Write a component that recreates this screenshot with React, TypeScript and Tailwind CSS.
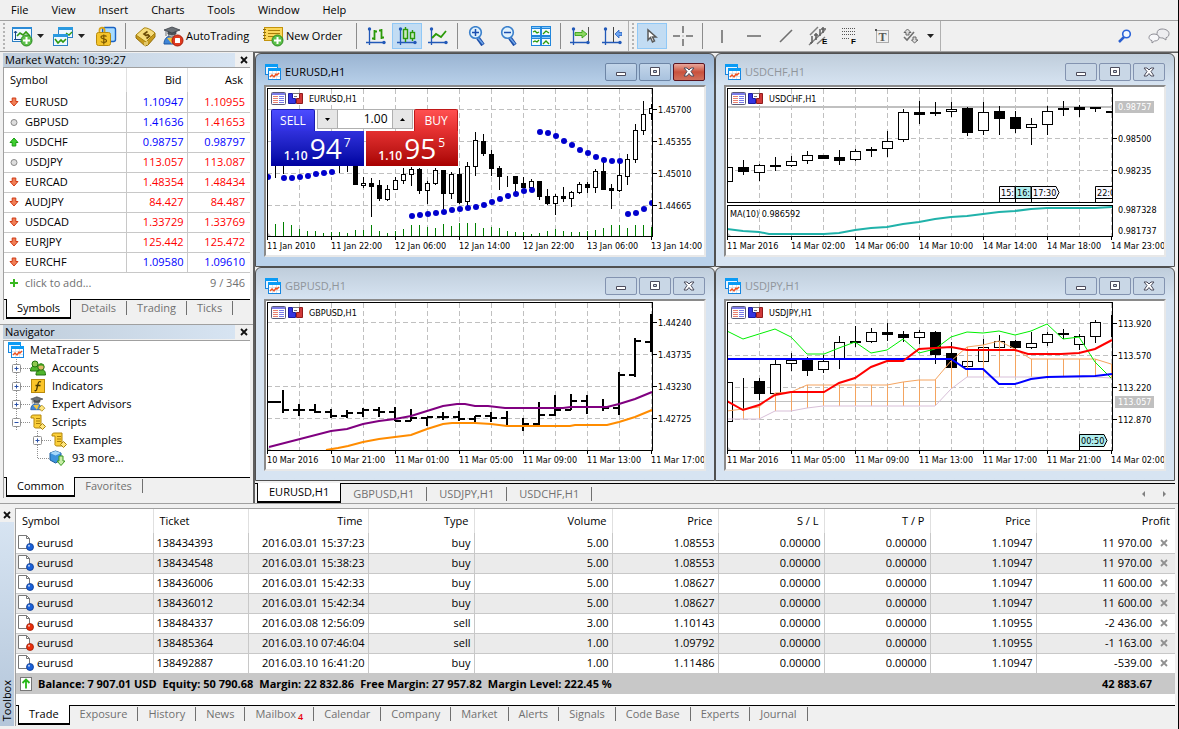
import React from "react";
import clsx from "clsx";

/* ---------- icons ---------- */

const ChartWindowIcon = () => (
  <svg width="16" height="16" viewBox="0 0 16 16" className="shrink-0">
    <rect x="0.5" y="0.5" width="12" height="10" fill="#eaf6ff" stroke="#1686e0" />
    <rect x="0" y="0" width="13" height="3" fill="#0a9bf5" />
    <rect x="3.5" y="4.5" width="12" height="11" fill="#fff" stroke="#1686e0" />
    <rect x="3" y="4" width="13" height="3" fill="#0a9bf5" />
    <path d="M4 9.5h11M4 12.5h11M7.5 7v8M11.5 7v8" stroke="#cfdbe6" strokeWidth="0.7" />
    <path d="M5 13l2-2 2 2 2-3 1 1 2-2" fill="none" stroke="#f0501e" strokeWidth="1.4" />
  </svg>
);

const PlusBadge = ({ x, y }: { x: number; y: number }) => (
  <g>
    <circle cx={x} cy={y} r="5.5" fill="#5cc04a" stroke="#2c8a20" />
    <path d={`M${x - 3.5} ${y}h7M${x} ${y - 3.5}v7`} stroke="#fff" strokeWidth="2" />
  </g>
);

const NewChartIcon = () => (
  <svg width="21" height="21" viewBox="0 0 21 21">
    <rect x="0.5" y="1.5" width="19" height="14" fill="#eef8ff" stroke="#2b7fc4" />
    <rect x="0" y="1" width="20" height="2" fill="#2b8ad6" />
    <path d="M3.5 14V5M2 7l1.5-2L5 7M2 13.5h15M15 12l2 1.5-2 1.5" fill="none" stroke="#1c4a86" />
    <path d="M5 10l3-3 3 2 3-3 4 4" fill="none" stroke="#2f9a10" strokeWidth="1.6" />
    <PlusBadge x={14.5} y={14.5} />
  </svg>
);

const ProfilesIcon = () => (
  <svg width="21" height="21" viewBox="0 0 21 21">
    <rect x="5.5" y="1.5" width="14" height="10" fill="#eef8ff" stroke="#2b7fc4" />
    <rect x="5" y="1" width="15" height="3" fill="#2b9ae0" />
    <path d="M13 7l3 2 3-3" fill="none" stroke="#2f9a10" strokeWidth="1.4" />
    <rect x="0.5" y="8.5" width="14" height="11" fill="#eef8ff" stroke="#2b7fc4" />
    <rect x="0" y="8" width="15" height="3" fill="#2b9ae0" />
    <path d="M2 13l3 4 3-3 2 2 3-3" fill="none" stroke="#2f9a10" strokeWidth="1.6" />
  </svg>
);

const MarketIcon = () => (
  <svg width="21" height="21" viewBox="0 0 21 21">
    <rect x="6.5" y="1.5" width="13" height="14" rx="2" fill="#a8dcff" stroke="#1b63c4" strokeWidth="1.4" />
    <path d="M3.5 7V4c0-3 5-3 5 0v3" fill="none" stroke="#d8a51a" strokeWidth="1.8" />
    <rect x="0.5" y="6.5" width="14" height="13" rx="2" fill="#f5c52c" stroke="#b88a0c" />
    <path d="M10.5 10.5c-1-1.2-5.5-1.3-5.5 0.7 0 2.2 5.5 1.2 5.5 3.6 0 2-4.500 2-5.500 0.700M7.800 8.500v10" fill="none" stroke="#7a5700" strokeWidth="1.2" />
  </svg>
);

const GoldIcon = () => (
  <svg width="21" height="21" viewBox="0 0 21 21">
    <path d="M1 9v3l9 8 3-1 7-8V7z" fill="#c89a1c" stroke="#94700c" />
    <path d="M1 9l8-7c3-1 9 3 11 5l-9 9z" fill="#f6dc7c" stroke="#a8830f" />
    <path d="M10 16v4M12 15v4" stroke="#fff3b0" />
    <path d="M12.500 5.500L9 8l2 1.500 2-0.800 1.500 1.500-3 2.300" fill="none" stroke="#6a4a05" strokeWidth="1.6" />
  </svg>
);

const Graduate = () => (
  <g>
    <path d="M1 18c0-5 3-8 7-8s7 3 7 8z" fill="#3f86d8" stroke="#1f56a0" />
    <path d="M4 12l5 6 3-7" fill="#f3c640" />
    <circle cx="8.5" cy="7.5" r="3.5" fill="#c0c4c8" stroke="#50565c" strokeWidth="0.6" />
    <path d="M5 5v3l4 1 4-1V5L9 7zM3 5v5" fill="#50565c" stroke="#3b4046" strokeWidth="0.7" />
    <path d="M1 4l8-3 8 3-8 3z" fill="#6c7278" stroke="#3b4046" strokeWidth="0.8" />
  </g>
);

const AutoTradingIcon = () => (
  <svg width="21" height="21" viewBox="0 0 21 21" className="shrink-0">
    <Graduate />
    <circle cx="14.5" cy="14.5" r="5.5" fill="#e03a1e" stroke="#a81c08" />
    <rect x="12" y="12" width="5" height="5" rx="0.5" fill="#fff" />
  </svg>
);

const NewOrderIcon = () => (
  <svg width="21" height="21" viewBox="0 0 21 21" className="shrink-0">
    <rect x="1.5" y="1.5" width="18" height="13" fill="#fbd75a" stroke="#c4940c" />
    <path d="M0 3.5h3M0 6.5h3M0 9.5h3M0 12.5h3" stroke="#8a6a10" />
    <path d="M5 4.5h12M5 7.5h12M5 10.5h7" stroke="#a87c08" />
    <PlusBadge x={14.5} y={14.5} />
  </svg>
);

const Axis = () => (
  <g>
    <path d="M3.5 3v16M0 16.5h19" stroke="#2259b8" strokeWidth="1.3" />
    <circle cx="3.5" cy="3" r="1.7" fill="#2259b8" />
    <circle cx="18" cy="16.5" r="1.7" fill="#2259b8" />
  </g>
);

const BarsIcon = () => (
  <svg width="20" height="20" viewBox="0 0 20 20">
    <Axis />
    <path d="M8.500 4v10M6 12.500h2.500M8.500 5.500h2.500M15.500 3v10M13 4.500h2.500M15.500 11.500h2.500" stroke="#2b9a08" strokeWidth="1.8" />
  </svg>
);

const CandlesIcon = () => (
  <svg width="20" height="20" viewBox="0 0 20 20">
    <Axis />
    <path d="M8.500 1v15M15.500 4v11" stroke="#2b9a08" strokeWidth="1.4" />
    <rect x="6.500" y="3.500" width="4" height="9" fill="#c9e8c0" stroke="#2b9a08" strokeWidth="1.4" />
    <rect x="13.500" y="6.500" width="4" height="6" fill="#c9e8c0" stroke="#2b9a08" strokeWidth="1.4" />
  </svg>
);

const LineIcon = () => (
  <svg width="20" height="20" viewBox="0 0 20 20">
    <Axis />
    <path d="M4 12l4-4 5 3 5-6" fill="none" stroke="#2b9a08" strokeWidth="1.8" />
  </svg>
);

const ZoomIcon = ({ plus }: { plus?: boolean }) => (
  <svg width="18" height="20" viewBox="0 0 18 20">
    <path d="M10 12l5 7" stroke="#1d4fa8" strokeWidth="4" />
    <path d="M10 12l5 6" stroke="#6fa5ea" strokeWidth="1.5" />
    <circle cx="7.500" cy="6.500" r="5.800" fill="#dff1fd" stroke="#3b80cc" strokeWidth="1.6" />
    <path d={plus ? "M4 6.500h7M7.500 3v7" : "M4 6.500h7"} stroke="#1b4fb0" strokeWidth="1.5" />
  </svg>
);

const TileIcon = () => (
  <svg width="20" height="20" viewBox="0 0 20 20">
    <rect width="20" height="20" fill="#2186dc" />
    <path d="M1 3h8v6H1zM11 3h8v6h-8zM1 13h8v6H1zM11 13h8v6h-8z" fill="#f2fbff" />
    <path d="M1 1.500h8M11 1.500h8M1 11.500h8M11 11.500h8" stroke="#86c8fa" />
    <path d="M2 6l2-1 2 2 2-1M12 8l3-3 3 2M2 16l2-1 2 1 2-2M12 18l3-3 3 3" fill="none" stroke="#2b9a08" strokeWidth="1.3" />
  </svg>
);

const AutoScrollIcon = () => (
  <svg width="20" height="20" viewBox="0 0 20 20">
    <Axis />
    <path d="M18.500 1v14" stroke="#555" />
    <path d="M5 6.500h7V4l5 4-5 4V9.500H5z" fill="#8cd860" stroke="#2b9a08" strokeWidth="0.8" />
  </svg>
);

const ShiftIcon = () => (
  <svg width="20" height="20" viewBox="0 0 20 20">
    <Axis />
    <path d="M11.500 1v15" stroke="#444" />
    <path d="M20 6.500h-3V4l-4 4 4 4V9.500h3z" fill="#6ba4f2" stroke="#2a62c0" strokeWidth="0.8" />
  </svg>
);

const CursorIcon = () => (
  <svg width="12" height="16" viewBox="0 0 12 16">
    <path d="M2 2v10l2.500-2.500L6.500 14l2-1-2-4H10z" fill="#fff" stroke="#5a5a5a" strokeWidth="1.5" />
  </svg>
);

const CrosshairIcon = () => (
  <svg width="20" height="20" viewBox="0 0 20 20">
    <path d="M10 0v7M10 13v7M0 10h7M13 10h7" stroke="#6a6a6a" strokeWidth="1.5" />
    <path d="M9.500 10h1" stroke="#6a6a6a" />
  </svg>
);

const StrokeIcon = ({ d }: { d: string }) => (
  <svg width="16" height="16" viewBox="0 0 16 16">
    <path d={d} stroke="#707070" strokeWidth="1.6" fill="none" />
  </svg>
);

const ChannelIcon = () => (
  <svg width="22" height="22" viewBox="0 0 22 22">
    <path d="M3 10L11 2M2 20L18 5M10 19l8-7" stroke="#808080" strokeWidth="1.5" />
    <path d="M5 18v-7M3 18h2M9 15V8M7 10h4M13 11V4M16 8V2M14 4h5" stroke="#5e5e5e" strokeWidth="1.5" />
    <text x="15" y="19" fontSize="8" fontWeight="bold" className="font-['Liberation_Sans',sans-serif]">E</text>
  </svg>
);

const FiboIcon = () => (
  <svg width="20" height="22" viewBox="0 0 20 22">
    <path d="M2 3.500h14M2 6.500h14M2 9.500h14M2 13.500h8" stroke="#555" strokeDasharray="1 1" />
    <text x="11" y="19" fontSize="8" fontWeight="bold" className="font-['Liberation_Sans',sans-serif]">F</text>
  </svg>
);

const TextIcon = () => (
  <svg width="16" height="16" viewBox="0 0 16 16">
    <rect x="2.500" y="2.500" width="12" height="12" fill="none" stroke="#666" strokeDasharray="1 1" />
    <rect x="1" y="1" width="2" height="2" fill="#555" />
    <text x="8.500" y="12.500" fontSize="12" fontWeight="bold" fill="#5a5a5a" textAnchor="middle" className="font-['Liberation_Serif',serif]">T</text>
  </svg>
);

const ShapesIcon = () => (
  <svg width="16" height="16" viewBox="0 0 16 16">
    <path d="M4.500 1L8 4.500H6V7H3V4.500H1zM11.500 15L8.500 12H10V9h3v3h2z" fill="#ddd" stroke="#666" />
    <path d="M1 9l3 3 7-8" fill="none" stroke="#707070" strokeWidth="1.6" />
  </svg>
);

const SearchIcon = () => (
  <svg width="14" height="14" viewBox="0 0 14 14">
    <path d="M6 8l-5 5" stroke="#2a5fd0" strokeWidth="2.5" />
    <circle cx="8.500" cy="5" r="3.800" fill="#f4f9ff" stroke="#2a62d8" strokeWidth="1.6" />
  </svg>
);

const ChatIcon = () => (
  <svg width="22" height="16" viewBox="0 0 22 16">
    <path d="M14 1c4 0 7 2 7 4.500S20 9 18 9.700V12l-3-2c-4 0-6-1.500-6-4.500S11 1 14 1z" fill="#ededf0" stroke="#8d8d95" />
    <path d="M6 6c3 0 5 1.500 5 3.700S9 13 6.500 13L4 15v-2.400C2 12 1 11 1 9.500 1 7.500 3 6 6 6z" fill="#f7f7f9" stroke="#8d8d95" />
  </svg>
);

const Caret = () => (
  <svg width="7" height="4" viewBox="0 0 7 4">
    <path d="M0 0h7L3.500 4z" fill="#222" />
  </svg>
);

const CloseX = ({ color = "#111" }: { color?: string }) => (
  <svg width="8" height="8" viewBox="0 0 8 8">
    <path d="M1 1l6 6M7 1L1 7" stroke={color} strokeWidth="1.8" />
  </svg>
);

const TrendIcon = ({ kind }: { kind: string }) => (
  <svg width="10" height="10" viewBox="0 0 10 10">
    {kind === "down" && <path d="M3.200 1h3.600v3.500H9L5 9 1 4.500h2.200z" fill="#f08058" stroke="#d03a14" />}
    {kind === "up" && <path d="M3.200 9h3.600V5.500H9L5 1 1 5.500h2.200z" fill="#40d030" stroke="#189a10" />}
    {kind === "flat" && <circle cx="5" cy="5.500" r="3" fill="#ddd" stroke="#888" />}
    {kind === "add" && <path d="M5 1v8M1 5h8" stroke="#38b820" strokeWidth="2" />}
  </svg>
);

const AccountsIcon = () => (
  <svg width="16" height="16" viewBox="0 0 16 16">
    <path d="M0.500 11c0-4 2-5 4.500-5s4 1 4 5zM6 15c0-4 2-5.500 5-5.500s4.500 1.500 4.500 5.500z" fill="#4fb52c" stroke="#22720e" />
    <circle cx="5" cy="4" r="3" fill="#8ec850" stroke="#22720e" />
    <circle cx="11" cy="7" r="3.200" fill="#e0b868" stroke="#22720e" />
    <path d="M7.800 6.500c0-4 6.400-4 6.400 0-2-1.500-4-1.500-6.400 0z" fill="#3a9a1c" />
  </svg>
);

const IndicatorIcon = () => (
  <svg width="16" height="16" viewBox="0 0 16 16">
    <rect x="1.500" y="1.500" width="13" height="13" fill="#fbc52a" stroke="#b98a0c" />
    <path d="M11 4c-2-1-2.500 0-3 2L6.500 12c-0.500 1-1 1-2 0.500M5.500 7.500h5" fill="none" stroke="#4a3a00" strokeWidth="1.3" />
  </svg>
);

const AdvisorIcon = () => (
  <svg width="16" height="16" viewBox="0 0 21 21">
    <Graduate />
    <path d="M15.500 12l4 4-4 4-4-4z" fill="#ffe680" stroke="#a8830f" />
  </svg>
);

const ScriptIcon = () => (
  <svg width="16" height="16" viewBox="0 0 16 16">
    <path d="M1 4V3c0-2 2-2 3-2h7v10h2c0 3-2 3-3 3H6c-3 0-2-3-2-3V4z" fill="#fbcf3a" stroke="#b3860a" />
    <path d="M6 4.500h4M6 7h4M6 9.500h4" stroke="#a87c08" />
    <path d="M12.500 9.500l3 3-3 3-3-3z" fill="#ffe680" stroke="#a8830f" />
  </svg>
);

const MoreIcon = () => (
  <svg width="16" height="16" viewBox="0 0 16 16">
    <path d="M1 3l5.500-2L12 3v7l-5.500 3L1 10z" fill="#3d93dc" stroke="#1c5c9c" />
    <path d="M1 3l5.500 2.500L12 3 6.500 1z" fill="#a6d8fa" />
    <path d="M10 6h4v5h2l-4 4.500L8 11h2z" fill="#c8eca8" stroke="#3a9a1c" />
  </svg>
);

const OrderIcon = ({ type }: { type: string }) => (
  <svg width="16" height="16" viewBox="0 0 16 16" className="shrink-0">
    <path d="M0.500 0.500h8l3 3v10H0.500z" fill="#fff" stroke="#777" />
    <path d="M8.500 0.500v3h3" fill="none" stroke="#777" />
    <circle cx="12" cy="12" r="3.500" fill={type === "buy" ? "#1c62d8" : "#e8300c"} stroke={type === "buy" ? "#0c3a90" : "#a01c04"} strokeWidth="0.8" />
    <circle cx="11" cy="10.800" r="1" fill="#fff" opacity="0.7" />
  </svg>
);

/* ---------- charts ---------- */

// x, high, low, body top, body bottom, filled
type Candle = [number, number, number, number, number, number];
type Point = [number, number];

const eurusd: Candle[] = [
  [9, 70, 91, 72, 78, 0], [17, 70, 87, 72, 78, 1], [73, 70, 86, 72, 78, 0], [81, 70, 85, 72, 78, 1],
  [89, 78, 98, 79, 98, 1], [97, 90, 101, 96, 98, 0], [105, 91, 130, 96, 100, 1], [113, 93, 114, 98, 112, 1],
  [121, 98, 114, 102, 112, 0], [129, 90, 103, 93, 102, 0], [137, 81, 97, 87, 93, 0], [145, 80, 99, 82, 87, 0],
  [153, 81, 107, 82, 104, 1], [161, 94, 117, 96, 103, 0], [169, 81, 98, 83, 96, 0], [177, 83, 122, 83, 107, 1],
  [185, 85, 112, 87, 106, 0], [193, 81, 117, 87, 116, 1], [201, 75, 119, 79, 114, 0], [209, 45, 89, 53, 79, 0],
  [217, 47, 69, 54, 67, 1], [225, 63, 89, 67, 82, 1], [233, 79, 103, 81, 90, 1], [241, 89, 100, 89, 90, 1],
  [249, 89, 105, 89, 97, 1], [257, 90, 101, 96, 101, 1], [265, 92, 102, 94, 100, 0], [273, 94, 113, 94, 110, 1],
  [281, 102, 118, 109, 117, 1], [289, 107, 128, 109, 116, 0], [297, 100, 115, 109, 112, 1], [305, 104, 120, 105, 111, 0],
  [313, 95, 107, 97, 105, 0], [321, 95, 106, 97, 101, 1], [329, 82, 106, 84, 100, 0], [337, 75, 103, 84, 103, 1],
  [345, 97, 122, 101, 104, 1], [353, 75, 105, 88, 103, 0], [361, 67, 98, 72, 89, 0], [369, 37, 76, 43, 72, 0],
  [377, 14, 48, 27, 43, 0], [385, 17, 33, 21, 26, 0],
];

const sar: Point[] = [
  [2, 90], [18, 91], [26, 91], [34, 90], [42, 89], [50, 87], [58, 86], [66, 85],
  [146, 129], [154, 128], [162, 127], [170, 126], [178, 125], [186, 123], [194, 122], [202, 121], [210, 120],
  [218, 118], [226, 115], [234, 112], [242, 109], [250, 107], [258, 104], [266, 103],
  [274, 45], [282, 46], [290, 49], [298, 54], [306, 58], [314, 63], [322, 66], [330, 70], [338, 73], [346, 74], [354, 74],
  [362, 127], [370, 126], [378, 122], [386, 116],
];

const volumes = [
  12, 14, 11, 7, 5, 5, 3, 4, 4, 3, 6, 6, 11, 5, 3, 5, 7, 11, 11, 9, 8, 12, 10, 13, 13, 13, 8, 9, 8, 5, 4, 4, 2, 3, 5,
  7, 5, 4, 4, 5, 6, 8, 11, 11, 8, 11, 11, 9,
];

const usdchf: Candle[] = [
  [1, 80, 94, 80, 94, 0], [17, 73, 88, 80, 85, 1], [33, 77, 94, 78, 85, 0], [49, 70, 84, 78, 80, 1],
  [65, 69, 80, 74, 78, 0], [81, 64, 77, 68, 73, 0], [97, 68, 72, 68, 72, 1], [113, 63, 78, 70, 74, 1],
  [129, 62, 74, 64, 72, 0], [145, 60, 70, 62, 64, 1], [161, 44, 70, 54, 61, 0], [177, 22, 55, 25, 52, 0],
  [193, 14, 37, 25, 28, 1], [209, 15, 29, 25, 27, 1], [225, 15, 30, 22, 24, 0], [241, 20, 49, 21, 46, 1],
  [257, 15, 48, 25, 43, 0], [273, 19, 48, 24, 32, 1], [289, 24, 46, 30, 42, 1], [305, 31, 58, 37, 40, 0],
  [321, 19, 48, 24, 37, 0], [337, 14, 29, 21, 23, 1], [353, 18, 30, 20, 23, 1], [369, 20, 25, 20, 22, 1],
  [385, 24, 26, 24, 26, 1],
];

const usdjpy: Candle[] = [
  [1, 81, 120, 81, 120, 0], [17, 77, 109, 81, 82, 1], [33, 77, 99, 80, 93, 1], [49, 59, 93, 63, 92, 0],
  [65, 52, 70, 59, 62, 0], [81, 56, 75, 59, 70, 1], [97, 54, 72, 60, 68, 0], [113, 35, 68, 41, 58, 0],
  [129, 25, 46, 40, 42, 1], [145, 27, 42, 31, 40, 0], [161, 22, 40, 31, 34, 1], [177, 30, 41, 33, 37, 1],
  [193, 29, 43, 31, 36, 0], [209, 30, 63, 31, 54, 1], [225, 41, 67, 52, 67, 1], [241, 60, 67, 60, 65, 0],
  [257, 38, 63, 46, 60, 0], [273, 34, 47, 40, 46, 0], [289, 39, 48, 40, 47, 1], [305, 31, 48, 42, 46, 0],
  [321, 31, 45, 33, 41, 0], [337, 28, 38, 32, 34, 1], [353, 33, 49, 35, 43, 0], [369, 19, 42, 21, 35, 0],
  [385, 14, 36, 20, 21, 1],
];

// x, high, low, open, close
const gbpusd = [
  [17, 89, 112, 0, 109], [33, 103, 115, 109, 109], [49, 103, 112, 109, 111], [65, 108, 117, 111, 115],
  [81, 109, 117, 115, 112], [97, 107, 116, 112, 109], [113, 106, 116, 109, 111], [129, 106, 120, 111, 120],
  [145, 108, 120, 120, 117], [161, 116, 125, 117, 116], [177, 111, 119, 116, 116], [193, 110, 120, 116, 118],
  [209, 115, 121, 118, 115], [225, 111, 121, 115, 117], [241, 110, 125, 117, 0], [257, 117, 130, 125, 123],
  [273, 101, 124, 123, 114], [289, 94, 115, 114, 109], [305, 93, 109, 109, 100], [321, 94, 113, 100, 106],
  [337, 98, 110, 106, 107], [353, 71, 114, 107, 74], [369, 37, 76, 74, 40], [385, 13, 51, 41, 0],
];

const maFast: Point[] = [
  [3, 146], [65, 130], [81, 128], [97, 123], [113, 120], [129, 118], [145, 115], [161, 110], [177, 105], [191, 103],
  [199, 103], [209, 105], [222, 105], [239, 107], [297, 107], [305, 106], [341, 106], [353, 103], [369, 98], [386, 91],
];
const maSlow: Point[] = [
  [60, 149], [72, 147], [82, 145], [97, 141], [113, 138], [129, 136], [145, 134], [161, 128], [177, 123], [186, 122],
  [209, 122], [225, 123], [241, 125], [304, 125], [309, 124], [341, 124], [353, 121], [369, 116], [386, 109],
];
const maChf: Point[] = [
  [1, 142], [17, 144], [33, 145], [43, 147], [98, 147], [113, 146], [129, 143], [145, 141], [161, 140], [177, 137],
  [193, 135], [209, 132], [225, 130], [241, 129], [257, 127], [273, 125], [289, 124], [305, 122], [321, 121],
  [369, 121], [386, 120],
];
const chikou: Point[] = [
  [1, 30], [17, 38], [33, 33], [49, 28], [65, 36], [81, 53], [98, 53], [113, 47], [129, 41], [145, 52], [161, 49],
  [177, 38], [193, 52], [209, 48], [225, 36], [241, 31], [257, 32], [273, 30], [289, 34], [305, 30], [321, 23],
  [337, 38], [353, 36], [369, 61], [385, 77],
];
const kijun: Point[] = [
  [1, 58], [225, 58], [240, 68], [257, 68], [273, 83], [289, 83], [305, 78], [321, 76], [369, 75], [386, 73],
];
const tenkan: Point[] = [
  [1, 100], [17, 109], [33, 104], [49, 94], [65, 91], [98, 91], [113, 82], [129, 77], [145, 66], [161, 60], [177, 60],
  [193, 48], [209, 47], [225, 46], [241, 49], [289, 49], [302, 53], [335, 53], [353, 52], [369, 48], [386, 39],
];
// x, upper span, lower span
const cloud = [
  [1, 110, 118], [17, 108, 118], [33, 106, 118], [49, 92, 110], [65, 91, 110], [81, 84, 107], [97, 84, 105],
  [113, 84, 105], [129, 84, 105], [145, 84, 105], [161, 84, 105], [177, 81, 105], [193, 79, 105], [209, 79, 105],
  [225, 60, 88], [241, 46, 76], [257, 44, 76], [273, 40, 76], [289, 48, 76], [305, 58, 76], [321, 58, 76],
  [337, 58, 76], [353, 58, 76], [369, 58, 76], [385, 63, 77],
];

const Line = ({ points, color, width = 1 }: { points: Point[]; color: string; width?: number }) => (
  <polyline points={points.map((p) => p.join(",")).join(" ")} fill="none" stroke={color} strokeWidth={width} />
);

const Candles = ({ data, half }: { data: Candle[]; half: number }) => (
  <g stroke="#000">
    {data.map(([x, high, low, top, bottom, filled]) => (
      <g key={x}>
        <path d={`M${x + 0.5} ${high}V${low}`} />
        <rect
          x={x + 0.5 - half}
          y={top + 0.5}
          width={half * 2}
          height={Math.max(bottom - top - (filled ? 1 : 0), 0)}
          fill={filled ? "#000" : "#fff"}
        />
      </g>
    ))}
  </g>
);

type ChartProps = {
  id: string;
  symbol: string;
  dates: string[];
  prices: [number, string][];
  scale?: [number, string][];
  price?: [number, string];
  frames?: [number, number][];
  children: React.ReactNode;
};

const Chart = ({ id, symbol, dates, prices, scale = [], price, frames = [[1, 149]], children }: ChartProps) => (
  <svg
    viewBox="0 0 438 168"
    className="block h-auto w-full bg-white font-['DejaVu_Sans_Condensed','Open_Sans',sans-serif] text-[9px]"
    role="img"
    aria-label={symbol}
  >
    <clipPath id={id}>
      <rect x="1" y="1" width="386" height="149" />
    </clipPath>
    <g stroke="#c0c0c0" strokeDasharray="5 3">
      {Array.from({ length: 12 }, (_, i) => (
        <path key={i} d={`M${33.5 + i * 32} 2V149`} />
      ))}
      {prices.map(([y]) => (
        <path key={y} d={`M1 ${y + 0.5}H386`} />
      ))}
    </g>
    <g clipPath={`url(#${id})`}>
      <path d="M1 145l4 4H1z" fill="#c0c0c0" />
      {children}
    </g>
    {frames.map(([top, bottom]) => (
      <rect key={top} x="1.5" y={top + 0.5} width="385" height={bottom - top} fill="none" stroke="#000" />
    ))}
    {dates.map((date, i) => (
      <g key={date}>
        <path d={`M${1.5 + i * 64} 149v4`} stroke="#000" />
        <text x={1 + i * 64} y="162">{date}</text>
      </g>
    ))}
    {prices.map(([y, label]) => (
      <g key={label}>
        <path d={`M387 ${y + 0.5}h4`} stroke="#000" />
        <text x="392" y={y + 4}>{label}</text>
      </g>
    ))}
    {scale.map(([y, label]) => (
      <text key={label} x="392" y={y}>{label}</text>
    ))}
    {price && (
      <g>
        <rect x="389" y={price[0] - 6} width="39" height="12" fill="#c0c0c0" />
        <text x="392" y={price[0] + 3} fill="#fff">{price[1]}</text>
      </g>
    )}
    <rect x="5.5" y="5.5" width="14" height="12" rx="1" fill="#fff" stroke="#5a5a78" />
    <path d="M6 7h13" stroke="#7c7ce8" strokeWidth="2" />
    <path d="M7 9.5h5M7 11.5h5M7 13.5h5M7 15.5h5" stroke="#e88070" />
    <path d="M13 9.5h5M13 11.5h5M13 13.5h5M13 15.5h5" stroke="#7878e8" />
    <path d="M22.5 6.5h4v5h3v5h-7z" fill="#3434e0" stroke="#1c1ca0" />
    <path d="M36.5 6.5h-3v5h-3v5h6z" fill="#d03838" stroke="#901c1c" />
    <path d="M27 6.5h6M28 9.5h3" stroke="#777" />
    <text x="43" y="15">{symbol}</text>
  </svg>
);

const Flag = ({ x, y, label, active, tip }: { x: number; y: number; label: string; active?: boolean; tip?: boolean }) => (
  <g>
    <path d={`M${x + 0.5} ${y + 16}V${y + 0.5}H${x + (tip ? 25 : 16)}${tip ? "l3 6-3 6" : "v12"}H${x + 0.5}`} fill={active ? "#afeeee" : "#f8f8ff"} stroke="#000" />
    <text x={x + 2} y={y + 10}>{label}</text>
  </g>
);

/* ---------- chart windows ---------- */

const WindowButton = ({ label, d, active }: { label: string; d: string; active?: boolean }) => (
  <button
    aria-label={label}
    className={clsx(
      "flex h-[18px] w-8 items-center justify-center rounded-[2px] border",
      active && label === "Close" && "border-[#5a1420] bg-linear-to-b from-[#e8a79c] via-[#c9513c] to-[#d0705c]",
      active && label !== "Close" && "border-[#6e86a6] bg-linear-to-b from-[#c3d6ea] to-[#a9c2de]",
      !active && "border-[#8393b0] bg-[#c9d7e6]"
    )}
  >
    <svg width="12" height="12" viewBox="0 0 12 12">
      <path d={d} fill="#fff" fillRule="evenodd" stroke="#4c4c5c" />
    </svg>
  </button>
);

const ChartWindow = ({ title, active, children }: { title: string; active?: boolean; children: React.ReactNode }) => (
  <section
    className={clsx(
      "min-w-0 rounded-t-md border border-[#505050] px-2 pb-[9px]",
      active ? "bg-linear-to-b from-[#9ab4d2] to-[#b9d1ea] to-15%" : "bg-linear-to-b from-[#bfcddb] to-[#d7e4f2] to-15%"
    )}
  >
    <header className="flex h-[31px] items-center gap-1 px-px pt-1">
      <ChartWindowIcon />
      <h2 className={clsx("flex-1", active ? "text-black" : "text-[#8f959b]")}>{title}</h2>
      <div className="flex gap-0.5">
        <WindowButton label="Minimize" active={active} d="M1.500 6.500h9v3h-9z" />
        <WindowButton label="Maximize" active={active} d="M1.500 1.500h9v8h-9zM4.500 4.500h3v2h-3z" />
        <WindowButton label="Close" active={active} d="M1 2h3l2 2 2-2h3L8 5.500 11 10H8L6 7.500 4 10H1l3-4.500z" />
      </div>
    </header>
    <div className="relative border-2 border-t-[#8a8a8a] border-r-[#e8e8e8] border-b-[#e8e8e8] border-l-[#8a8a8a]">{children}</div>
  </section>
);

const OneClickTrading = () => (
  <div className="absolute top-[22px] left-[5px] w-[187px] text-white">
    <div className="flex justify-between">
      <button className="h-[22px] w-11 rounded-t-[2px] border border-b-0 border-[#1c1cb0] bg-linear-to-b from-[#4c4cff] to-[#3030e0] text-[12px]">SELL</button>
      <div className="flex h-5 w-[96px] border border-[#b0b0b0] bg-white">
        <button aria-label="Less" className="flex w-[19px] items-center justify-center bg-[#e6e6e6]">
          <svg width="5" height="3"><path d="M0 0h5L2.500 3z" /></svg>
        </button>
        <input aria-label="Volume" defaultValue="1.00" className="min-w-0 flex-1 border-x border-[#b0b0b0] pr-1 text-right text-[12px] text-black" />
        <button aria-label="More" className="flex w-[19px] items-center justify-center bg-[#e6e6e6]">
          <svg width="5" height="3"><path d="M0 3h5L2.500 0z" /></svg>
        </button>
      </div>
      <button className="h-[22px] w-11 rounded-t-[2px] border border-b-0 border-[#c01818] bg-linear-to-b from-[#ff5050] to-[#e43030] text-[12px]">BUY</button>
    </div>
    <div className="grid grid-cols-2 gap-0.5">
      <div className="flex h-[35px] items-end justify-center gap-0.5 bg-linear-to-b from-[#3030dc] to-[#0000a0]">
        <b className="pb-1 text-[12px] leading-3 font-semibold">1.10</b>
        <span className="pb-1 text-[28px] leading-7">94</span>
        <span className="self-start pt-1.5 text-[12px] leading-3">7</span>
      </div>
      <div className="flex h-[35px] items-end justify-center gap-0.5 bg-linear-to-b from-[#e43030] to-[#a80000]">
        <b className="pb-1 text-[12px] leading-3 font-semibold">1.10</b>
        <span className="pb-1 text-[28px] leading-7">95</span>
        <span className="self-start pt-1.5 text-[12px] leading-3">5</span>
      </div>
    </div>
  </div>
);

/* ---------- shared panel parts ---------- */

const Tabs = ({ items, badge }: { items: string[]; badge?: Record<string, number> }) => (
  <div role="tablist" className="flex h-[21px]">
    <div className="w-0.5 border-t border-black" />
    <button role="tab" aria-selected="true" className="mb-px border border-t-0 border-b-2 border-black bg-white px-2.5 text-black">
      {items[0]}
    </button>
    <div className="flex flex-1 items-center border-t border-black pb-[3px] text-[#707070]">
      {items.slice(1).map((item) => (
        <button role="tab" key={item} className="flex h-3.5 items-center border-r border-[#707070] px-2.5 leading-3.5">
          {item}
          {badge?.[item] && <span className="self-end pl-0.5 text-[9px] leading-2 font-semibold text-red-600">{badge[item]}</span>}
        </button>
      ))}
    </div>
  </div>
);

const PanelCaption = ({ title }: { title: string }) => (
  <div className="flex h-[15px] items-center pl-[3px]">
    <h2 className="flex-1 bg-linear-to-r from-[#bfcddb] to-[#d7e4f2] pl-0.5 leading-3.5">{title}</h2>
    <button aria-label="Close" className="flex w-[18px] justify-center">
      <CloseX />
    </button>
  </div>
);

/* ---------- toolbar ---------- */

const Sep = () => <div className="mx-[3px] h-[26px] w-px shrink-0 bg-[#8c8c8c]" />;
const Grip = () => <div className="mx-[3px] h-[26px] w-0 shrink-0 border-l-2 border-dotted border-[#b4b4b4]" />;

const Tool = ({ label, on, children }: { label: string; on?: boolean; children: React.ReactNode }) => (
  <button
    aria-label={label}
    className={clsx("flex h-[26px] shrink-0 items-center justify-center", on ? "w-[30px] border border-[#90c8f6] bg-[#c2dcf3]" : "w-8")}
  >
    {children}
  </button>
);

const Toolbar = () => (
  <div className="flex h-8 items-center border-y border-t-[#a0a0a0] border-b-[#a0a0a0]">
    <Grip />
    <button aria-label="New chart" className="flex w-[41px] shrink-0 items-center gap-1 pl-1"><NewChartIcon /><Caret /></button>
    <button aria-label="Profiles" className="flex w-[41px] shrink-0 items-center gap-1 pl-1"><ProfilesIcon /><Caret /></button>
    <Tool label="Market"><MarketIcon /></Tool>
    <Sep />
    <Tool label="History"><GoldIcon /></Tool>
    <button className="flex w-[102px] shrink-0 items-center gap-0.5 pl-0.5"><AutoTradingIcon />AutoTrading</button>
    <button className="flex w-[90px] shrink-0 items-center gap-0.5"><NewOrderIcon /><span className="whitespace-nowrap">New Order</span></button>
    <Sep />
    <Tool label="Bars"><BarsIcon /></Tool>
    <Tool label="Candles" on><CandlesIcon /></Tool>
    <Tool label="Line"><LineIcon /></Tool>
    <Sep />
    <Tool label="Zoom in"><ZoomIcon plus /></Tool>
    <Tool label="Zoom out"><ZoomIcon /></Tool>
    <Tool label="Tile"><TileIcon /></Tool>
    <Sep />
    <Tool label="Auto scroll"><AutoScrollIcon /></Tool>
    <Tool label="Chart shift"><ShiftIcon /></Tool>
    <div className="h-[30px] w-px bg-[#b0b0b0]" />
    <Grip />
    <Tool label="Cursor" on><CursorIcon /></Tool>
    <Tool label="Crosshair"><CrosshairIcon /></Tool>
    <Sep />
    <Tool label="Vertical line"><StrokeIcon d="M8 2v13" /></Tool>
    <Tool label="Horizontal line"><StrokeIcon d="M1 8h14" /></Tool>
    <Tool label="Trend line"><StrokeIcon d="M2 14L14 2" /></Tool>
    <Tool label="Channel"><ChannelIcon /></Tool>
    <Tool label="Fibonacci"><FiboIcon /></Tool>
    <Tool label="Text"><TextIcon /></Tool>
    <button aria-label="Shapes" className="flex w-10 shrink-0 items-center justify-center gap-2"><ShapesIcon /><Caret /></button>
    <div className="ml-0.5 h-[30px] w-px bg-[#b0b0b0]" />
    <div className="ml-auto flex items-center gap-4 pr-2">
      <button aria-label="Search"><SearchIcon /></button>
      <button aria-label="Chat"><ChatIcon /></button>
    </div>
  </div>
);

/* ---------- market watch + navigator ---------- */

const quotes = [
  ["down", "EURUSD", "1.10947", "1.10955", "b", "r"],
  ["flat", "GBPUSD", "1.41636", "1.41653", "b", "r"],
  ["up", "USDCHF", "0.98757", "0.98797", "b", "b"],
  ["flat", "USDJPY", "113.057", "113.087", "r", "r"],
  ["down", "EURCAD", "1.48354", "1.48434", "r", "r"],
  ["down", "AUDJPY", "84.427", "84.487", "r", "r"],
  ["down", "USDCAD", "1.33729", "1.33769", "r", "r"],
  ["down", "EURJPY", "125.442", "125.472", "r", "r"],
  ["down", "EURCHF", "1.09580", "1.09610", "b", "b"],
];

const quoteColor: Record<string, string> = { b: "text-[#0000ff]", r: "text-[#ff0000]" };

const MarketWatch = () => (
  <section>
    <PanelCaption title="Market Watch: 10:39:27" />
    <div className="mr-[3px] ml-[3px] border-t border-l border-[#a0a0a0]">
      <div className="bg-white pb-1.5">
        <table className="w-full table-fixed border-collapse">
          <thead>
            <tr className="h-6">
              <th className="w-[122px] pl-1.5 text-left font-normal">Symbol</th>
              <th className="w-[61px] border-l border-[#e0e0e0] pr-[5px] text-right font-normal">Bid</th>
              <th className="border-l border-[#e0e0e0] pr-[7px] text-right font-normal">Ask</th>
            </tr>
          </thead>
          <tbody>
            {quotes.map(([trend, symbol, bid, ask, bidColor, askColor]) => (
              <tr key={symbol} className="h-5 border-b border-[#c8c8c8]">
                <td>
                  <div className="flex items-center gap-1.5 pl-[5px]"><TrendIcon kind={trend} />{symbol}</div>
                </td>
                <td className={clsx("border-l border-[#c8c8c8] pr-[3px] text-right", quoteColor[bidColor])}>{bid}</td>
                <td className={clsx("border-l border-[#c8c8c8] pr-[5px] text-right", quoteColor[askColor])}>{ask}</td>
              </tr>
            ))}
          </tbody>
        </table>
        <div className="flex h-5 items-center gap-1.5 pr-[5px] pl-[5px] text-[#707070]">
          <TrendIcon kind="add" />
          <span className="flex-1">click to add...</span>
          <span>9 / 346</span>
        </div>
      </div>
      <Tabs items={["Symbols", "Details", "Trading", "Ticks"]} />
    </div>
  </section>
);

const Expander = ({ open }: { open?: boolean }) => (
  <svg width="18" height="18" viewBox="0 0 18 18" className="shrink-0">
    <path d="M4.500 0v18M9 9.500h9" stroke="#909090" strokeDasharray="1 1" />
    <rect x="0.500" y="5.500" width="8" height="8" rx="1" fill="#fff" stroke="#919191" />
    <path d={open ? "M2.500 9.500h4" : "M2.500 9.500h4M4.500 7.500v4"} stroke="#2a50a8" />
  </svg>
);

const TreeRow = ({ icon, label, open }: { icon: React.ReactNode; label: string; open?: boolean }) => (
  <div className="flex h-[18px] items-center">
    <Expander open={open} />
    {icon}
    <span className="pl-1.5">{label}</span>
  </div>
);

const Navigator = () => (
  <section className="mt-1 border-t border-[#a0a0a0]">
    <PanelCaption title="Navigator" />
    <div className="mr-[3px] ml-[3px] border-t border-l border-[#a0a0a0]">
      <div className="bg-white pb-2.5 pl-2">
        <div className="-ml-1 flex h-[18px] items-center gap-1.5"><ChartWindowIcon />MetaTrader 5</div>
        <TreeRow icon={<AccountsIcon />} label="Accounts" />
        <TreeRow icon={<IndicatorIcon />} label="Indicators" />
        <TreeRow icon={<AdvisorIcon />} label="Expert Advisors" />
        <TreeRow icon={<ScriptIcon />} label="Scripts" open />
        <div className="pl-[21px]">
          <TreeRow icon={<ScriptIcon />} label="Examples" />
          <div className="flex h-[18px] items-center">
            <svg width="16" height="18" viewBox="0 0 16 18">
              <path d="M4.500 0v9.500H16" fill="none" stroke="#909090" strokeDasharray="1 1" />
            </svg>
            <MoreIcon />
            <span className="pl-[7px]">93 more...</span>
          </div>
        </div>
      </div>
      <Tabs items={["Common", "Favorites"]} />
    </div>
  </section>
);

/* ---------- toolbox ---------- */

const trades = [
  ["138434393", "2016.03.01 15:37:23", "buy", "5.00", "1.08553", "1.10947", "11 970.00"],
  ["138434548", "2016.03.01 15:38:23", "buy", "5.00", "1.08553", "1.10947", "11 970.00"],
  ["138436006", "2016.03.01 15:42:33", "buy", "5.00", "1.08627", "1.10947", "11 600.00"],
  ["138436012", "2016.03.01 15:42:34", "buy", "5.00", "1.08627", "1.10947", "11 600.00"],
  ["138484337", "2016.03.08 12:56:09", "sell", "3.00", "1.10143", "1.10955", "-2 436.00"],
  ["138485364", "2016.03.10 07:46:04", "sell", "1.00", "1.09792", "1.10955", "-1 163.00"],
  ["138492887", "2016.03.10 16:41:20", "buy", "1.00", "1.11486", "1.10947", "-539.00"],
];

const columns = [
  ["Symbol", "w-[137px]"], ["Ticket", "w-[95px]"], ["Time", "w-[120px]"], ["Type", "w-[106px]"], ["Volume", "w-[138px]"],
  ["Price", "w-[106px]"], ["S / L", "w-[106px]"], ["T / P", "w-[106px]"], ["Price", "w-[106px]"], ["Profit", "w-[139px]"],
];

const totals = ["Balance: 7 907.01 USD", "Equity: 50 790.68", "Margin: 22 832.86", "Free Margin: 27 957.82", "Margin Level: 222.45 %"];

const cell = "border-l border-[#c8c8c8] pr-[3px] text-right";

const Toolbox = () => (
  <section className="flex border-t border-[#a0a0a0] pt-1 pr-[3px]">
    <div className="flex w-[15px] shrink-0 flex-col pr-px">
      <button aria-label="Close" className="flex h-3.5 items-center justify-center"><CloseX /></button>
      <div className="flex flex-1 items-center justify-end bg-linear-to-t from-[#b4c6da] to-[#d7e4f2] pb-1 [writing-mode:vertical-rl]">
        <h2 className="rotate-180 leading-3.5">Toolbox</h2>
      </div>
    </div>
    <div className="min-w-0 flex-1 border-t border-l border-[#a0a0a0]">
      <div className="bg-white pb-[11px]">
        <table className="w-full table-fixed border-collapse">
          <thead>
            <tr className="h-6">
              {columns.map(([name, width], i) => (
                <th
                  key={i}
                  className={clsx(width, "font-normal", i > 0 && "border-l border-[#e0e0e0]", i < 2 ? "pl-1.5 text-left" : "pr-[5px] text-right")}
                >
                  {name}
                </th>
              ))}
            </tr>
          </thead>
          <tbody>
            {trades.map(([ticket, time, type, volume, open, current, profit]) => (
              <tr key={ticket} className="h-5 border-b border-[#c8c8c8] even:bg-[#ebebeb]">
                <td><div className="flex items-center gap-[3px] pl-0.5"><OrderIcon type={type} />eurusd</div></td>
                <td className="border-l border-[#c8c8c8] pl-[3px]">{ticket}</td>
                <td className={cell}>{time}</td>
                <td className={cell}>{type}</td>
                <td className={cell}>{volume}</td>
                <td className={cell}>{open}</td>
                <td className={cell}>0.00000</td>
                <td className={cell}>0.00000</td>
                <td className={cell}>{current}</td>
                <td className={cell}>
                  <div className="flex items-center justify-end gap-2 pr-1">
                    {profit}
                    <button aria-label="Close position"><CloseX color="#909090" /></button>
                  </div>
                </td>
              </tr>
            ))}
          </tbody>
        </table>
        <div className="flex h-5 items-center gap-1.5 bg-[#c8c8c8] pr-[23px] pl-1 font-bold">
          <svg width="12" height="14" viewBox="0 0 12 14">
            <rect x="0.500" y="0.500" width="11" height="13" fill="#fff" stroke="#777" />
            <path d="M6 2.500v9M2.500 6L6 2.500 9.500 6" fill="none" stroke="#28b818" strokeWidth="1.8" />
          </svg>
          {totals.map((total) => <span key={total}>{total}</span>)}
          <span className="ml-auto">42 883.67</span>
        </div>
      </div>
      <Tabs
        items={["Trade", "Exposure", "History", "News", "Mailbox", "Calendar", "Company", "Market", "Alerts", "Signals", "Code Base", "Experts", "Journal"]}
        badge={{ Mailbox: 4 }}
      />
    </div>
  </section>
);

/* ---------- page ---------- */

const App = () => {
  return (
    <div className="min-h-screen border-r border-black bg-[#f0f0f0] font-['Open_Sans','Noto_Sans',sans-serif] text-[11px] leading-4 text-black">
      <nav className="flex h-5 items-center gap-[23px] pl-[11px]">
        {["File", "View", "Insert", "Charts", "Tools", "Window", "Help"].map((item) => (
          <button key={item}>{item}</button>
        ))}
      </nav>
      <Toolbar />
      <main className="flex">
        <aside className="w-[253px] shrink-0">
          <MarketWatch />
          <Navigator />
        </aside>
        <div className="min-w-0 flex-1 border-t border-l-2 border-[#606060] pr-[3px]">
          <div className="grid grid-cols-2">
            <ChartWindow title="EURUSD,H1" active>
              <Chart
                id="eurusd"
                symbol="EURUSD,H1"
                dates={["11 Jan 2010", "11 Jan 22:00", "12 Jan 06:00", "12 Jan 14:00", "12 Jan 22:00", "13 Jan 06:00", "13 Jan 14:00"]}
                prices={[[22, "1.45700"], [54, "1.45355"], [86, "1.45010"], [118, "1.44665"]]}
              >
                {volumes.map((v, i) => (
                  <path key={i} d={`M${9.5 + i * 8} 149v-${v}`} stroke="#008000" />
                ))}
                <Candles data={eurusd} half={2} />
                {sar.map(([x, y]) => (
                  <circle key={x} cx={x} cy={y} r="3" fill="#0000cd" />
                ))}
              </Chart>
              <OneClickTrading />
            </ChartWindow>
            <ChartWindow title="USDCHF,H1">
              <Chart
                id="usdchf"
                symbol="USDCHF,H1"
                dates={["11 Mar 2016", "14 Mar 02:00", "14 Mar 06:00", "14 Mar 10:00", "14 Mar 14:00", "14 Mar 18:00", "14 Mar 23:00"]}
                prices={[[51, "0.98500"], [83, "0.98235"]]}
                scale={[[126, "0.987328"], [147, "0.981737"]]}
                price={[20, "0.98757"]}
                frames={[[1, 115], [118, 149]]}
              >
                <path d="M1 20H387" stroke="#c0c0c0" strokeWidth="2" />
                <Candles data={usdchf} half={5} />
                <Flag x={273} y={99} label="15:" />
                <Flag x={289} y={99} label="16:" active />
                <Flag x={305} y={99} label="17:30" tip />
                <Flag x={369} y={99} label="22:00" tip />
                <rect x="1" y="116" width="386" height="2" fill="#fff" />
                <Line points={maChf} color="#20b2aa" width={2} />
                <text x="4" y="130">MA(10) 0.986592</text>
              </Chart>
            </ChartWindow>
            <ChartWindow title="GBPUSD,H1">
              <Chart
                id="gbpusd"
                symbol="GBPUSD,H1"
                dates={["10 Mar 2016", "10 Mar 21:00", "11 Mar 01:00", "11 Mar 05:00", "11 Mar 09:00", "11 Mar 13:00", "11 Mar 17:00"]}
                prices={[[21, "1.44240"], [53, "1.43735"], [85, "1.43230"], [117, "1.42725"]]}
              >
                <g stroke="#000" strokeWidth="2">
                  <path d="M1 101h14" />
                  {gbpusd.map(([x, high, low, open, close]) => (
                    <path key={x} d={`M${x} ${high}V${low}${open ? `M${x - 6} ${open}h6` : ""}${close ? `M${x} ${close}h6` : ""}`} />
                  ))}
                </g>
                <Line points={maFast} color="#800080" width={2} />
                <Line points={maSlow} color="#ff8c00" width={2} />
              </Chart>
            </ChartWindow>
            <ChartWindow title="USDJPY,H1">
              <Chart
                id="usdjpy"
                symbol="USDJPY,H1"
                dates={["11 Mar 2016", "11 Mar 05:00", "11 Mar 09:00", "11 Mar 13:00", "11 Mar 17:00", "11 Mar 21:00", "14 Mar 02:00"]}
                prices={[[22, "113.920"], [54, "113.570"], [86, "113.220"], [118, "112.870"]]}
                price={[101, "113.057"]}
              >
                <path d="M1 100.500H387" stroke="#c0c0c0" />
                <Candles data={usdjpy} half={5} />
                {cloud.map(([x, top, bottom]) => (
                  <path key={x} d={`M${x + 0.5} ${top}V${bottom}`} stroke="#f4a460" />
                ))}
                <Line points={cloud.map(([x, , y]) => [x, y])} color="#d8bfd8" />
                <Line points={cloud.map(([x, y]) => [x, y])} color="#f4a460" />
                <Line points={chikou} color="#00f000" />
                <Line points={kijun} color="#0000ff" width={2} />
                <Line points={tenkan} color="#ff0000" width={2} />
                <Flag x={353} y={133} label="00:50" active tip />
              </Chart>
            </ChartWindow>
          </div>
          <div role="tablist" className="mt-0.5 flex h-5">
            <div className="w-0.5 border-t border-black" />
            <button role="tab" aria-selected="true" className="border border-t-0 border-b-2 border-black bg-white px-[11px]">EURUSD,H1</button>
            <div className="flex flex-1 items-center border-t border-black text-[#707070]">
              {["GBPUSD,H1", "USDJPY,H1", "USDCHF,H1"].map((item) => (
                <button role="tab" key={item} className="h-3.5 border-r border-[#707070] px-3 leading-3.5">{item}</button>
              ))}
              <div className="ml-auto flex gap-4 pr-2">
                <button aria-label="Previous"><svg width="5" height="8"><path d="M4 1v6L1 4z" fill="#808080" /></svg></button>
                <button aria-label="Next"><svg width="5" height="8"><path d="M1 1v6l3-3z" fill="#808080" /></svg></button>
              </div>
            </div>
          </div>
        </div>
      </main>
      <Toolbox />
    </div>
  );
};

export default App;
